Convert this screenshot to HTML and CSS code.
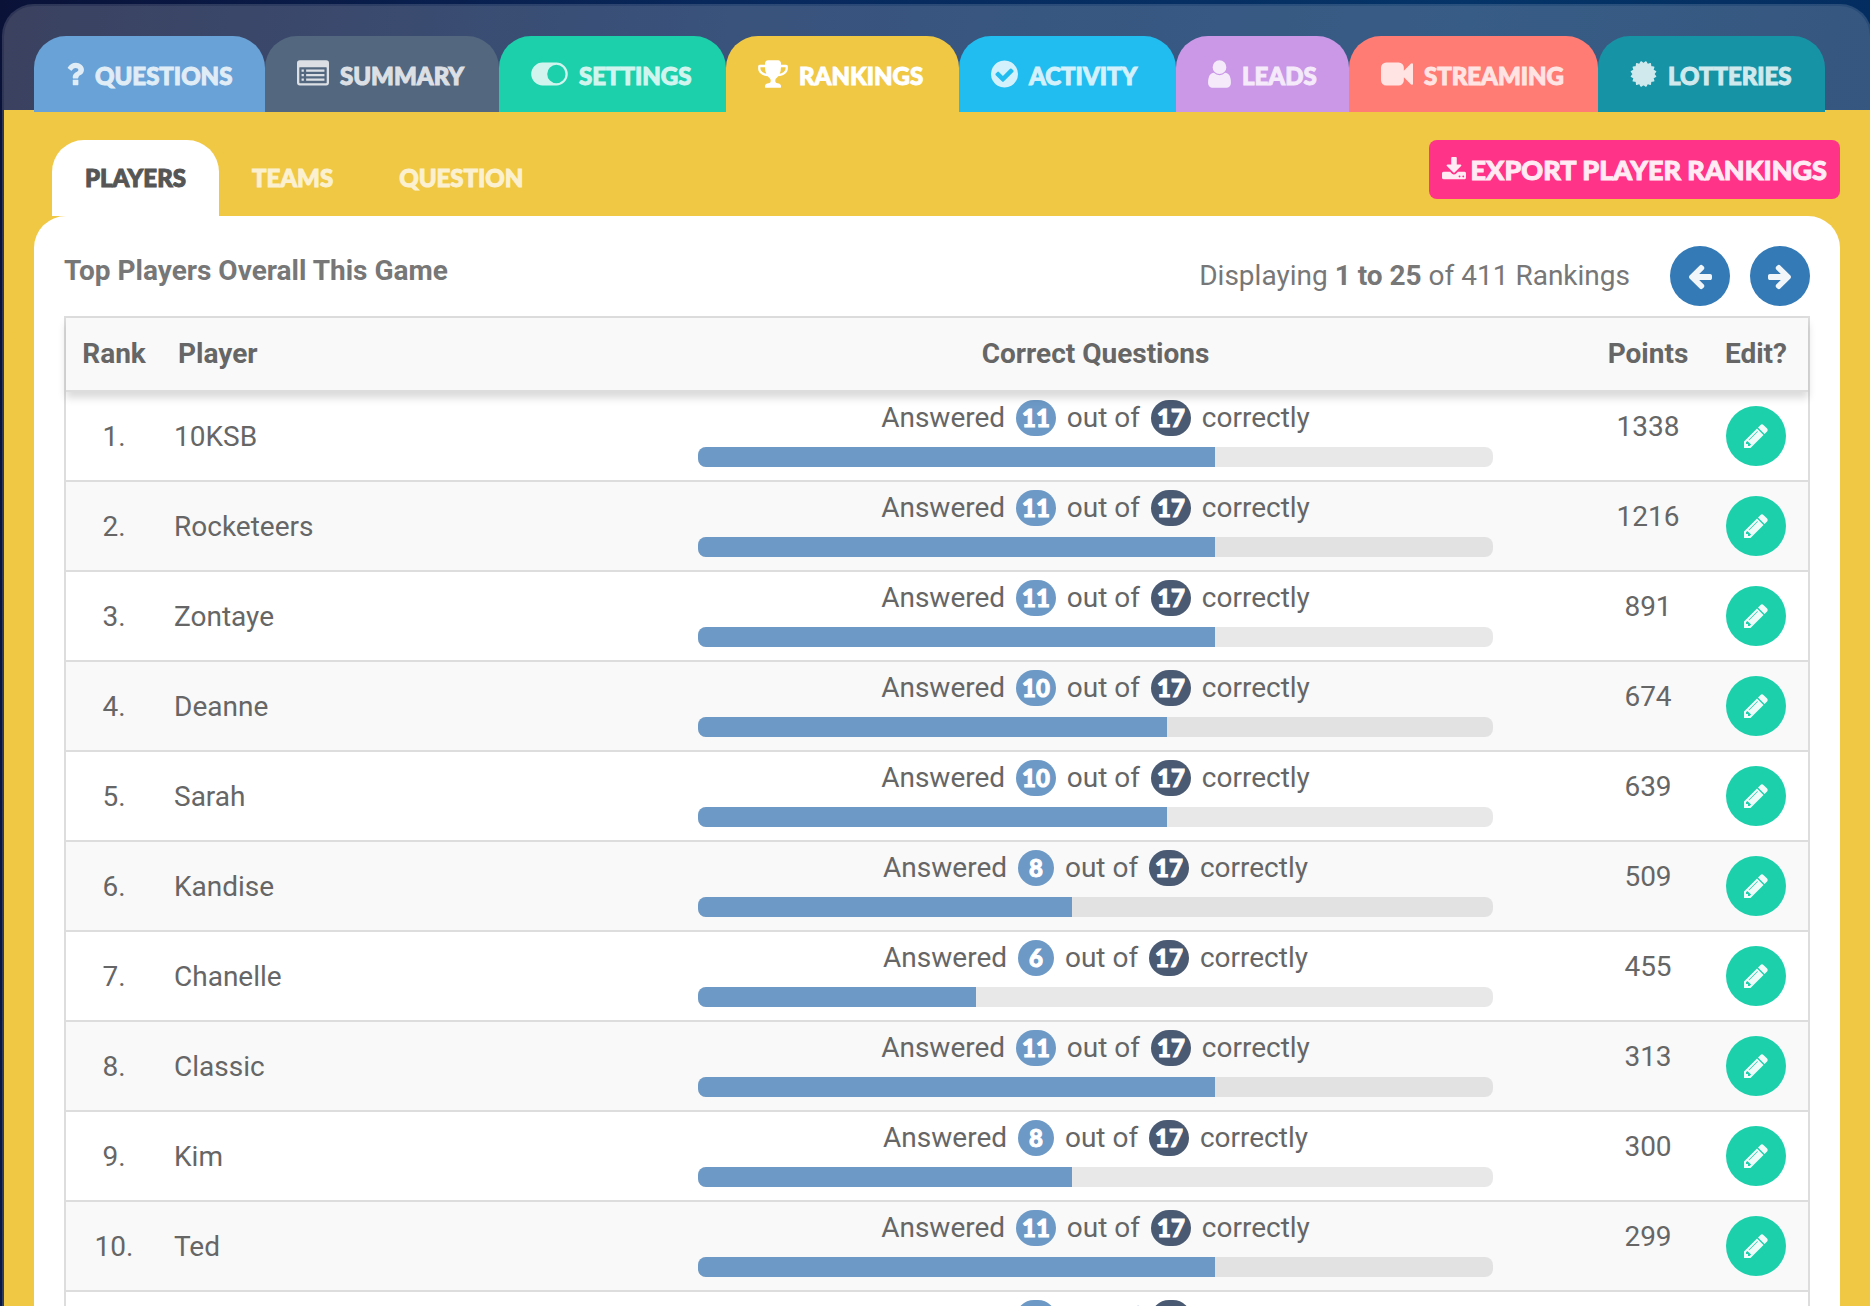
FILE: index.html
```html
<!DOCTYPE html>
<html lang="en">
<head>
<meta charset="utf-8">
<title>Player Rankings</title>
<link rel="stylesheet" href="styles.css">
</head>
<body>
<svg class="sprite" aria-hidden="true">
  <symbol id="i-question" viewBox="384 0 1024 1792"><path d="M1088 1256v240q0 16-12 28t-28 12h-240q-16 0-28-12t-12-28v-240q0-16 12-28t28-12h240q16 0 28 12t12 28zm316-600q0 54-15.500 101t-35 76.500-55 59.500-57.500 43.500-61 35.500q-41 23-68.500 65t-27.500 67q0 17-12 32.500t-28 15.500h-240q-15 0-25.500-18.500t-10.500-37.500v-45q0-83 65-156.500t143-108.500q59-27 84-56t25-76q0-42-46.500-74t-107.500-32q-65 0-108 29-35 25-107 115-13 16-31 16-12 0-25-8l-164-125q-13-10-15.500-25t5.500-28q160-266 464-266 80 0 161 31t146 83 106 127.500 41 158.500z"/></symbol>
  <symbol id="i-list" viewBox="0 0 1792 1792"><path fill-rule="evenodd" d="M160 128h1472a160 160 0 0 1 160 160v1088a160 160 0 0 1-160 160H160a160 160 0 0 1-160-160V288a160 160 0 0 1 160-160zm0 384a32 32 0 0 0-32 32v832a32 32 0 0 0 32 32h1472a32 32 0 0 0 32-32V544a32 32 0 0 0-32-32z"/><path d="M256 640h128v128H256zM256 896h128v128H256zM256 1152h128v128H256zM512 640h1024v128H512zM512 896h1024v128H512zM512 1152h1024v128H512z"/></symbol>
  <symbol id="i-toggle" viewBox="0 0 2048 1792"><path fill-rule="evenodd" d="M640 256h768a640 640 0 0 1 0 1280H640a640 640 0 0 1 0-1280zm768 128a512 512 0 1 0 0 1024 512 512 0 0 0 0-1024z"/></symbol>
  <symbol id="i-trophy" viewBox="64 0 1664 1792"><path d="M522 883q-74-162-74-371h-256v96q0 78 94.500 162t235.500 113zm1078-275v-96h-256q0 209-74 371 141-29 235.500-113t94.500-162zm128-128v128q0 71-41.500 143t-112 130-173 97.500-215.500 44.500q-42 54-95 95-38 34-52.500 72.500t-14.500 89.500q0 54 30.500 91t97.500 37q75 0 133.500 45.500t58.500 114.500v64q0 14-9 23t-23 9h-832q-14 0-23-9t-9-23v-64q0-69 58.500-114.500t133.500-45.500q67 0 97.500-37t30.500-91q0-51-14.500-89.500t-52.500-72.500q-53-41-95-95-113-5-215.500-44.500t-173-97.500-112-130-41.500-143v-128q0-40 28-68t68-28h288v-96q0-66 47-113t113-47h576q66 0 113 47t47 113v96h288q40 0 68 28t28 68z"/></symbol>
  <symbol id="i-check" viewBox="128 0 1536 1792"><path d="M1412 734q0-28-18-46l-91-90q-19-19-45-19t-45 19l-408 407-226-226q-19-19-45-19t-45 19l-91 90q-18 18-18 46 0 27 18 45l362 362q19 19 45 19 27 0 46-19l543-543q18-18 18-45zm252 162q0 209-103 385.500t-279.500 279.500-385.500 103-385.500-103-279.500-279.500-103-385.500 103-385.500 279.500-279.500 385.500-103 385.500 103 279.500 279.500 103 385.500z"/></symbol>
  <symbol id="i-user" viewBox="256 0 1280 1792"><path d="M1536 1399q0 109-62.500 187t-150.500 78h-854q-88 0-150.500-78t-62.500-187q0-85 8.500-160.500t31.500-152 58.500-131 94-89 134.500-34.500q131 128 313 128t313-128q76 0 134.500 34.500t94 89 58.500 131 31.500 152 8.500 160.500zm-256-887q0 159-112.500 271.500t-271.500 112.500-271.500-112.500-112.500-271.500 112.500-271.500 271.500-112.500 271.500 112.500 112.500 271.500z"/></symbol>
  <symbol id="i-video" viewBox="0 0 1792 1792"><path d="M1792 352v1088q0 42-39 59-13 5-25 5-27 0-45-19l-403-403v166q0 119-84.500 203.500t-203.500 84.500h-704q-119 0-203.500-84.500t-84.500-203.500v-704q0-119 84.500-203.500t203.500-84.500h704q119 0 203.500 84.500t84.500 203.500v165l403-402q18-19 45-19 12 0 25 5 39 17 39 59z"/></symbol>
  <symbol id="i-cert" viewBox="128 0 1536 1792"><path stroke="currentColor" stroke-width="80" stroke-linejoin="round" d="M896 316L1033 209L1118 360L1285 314L1306 486L1478 507L1432 674L1583 759L1476 896L1583 1033L1432 1118L1478 1285L1306 1306L1285 1478L1118 1432L1033 1583L896 1476L759 1583L674 1432L507 1478L486 1306L314 1285L360 1118L209 1033L316 896L209 759L360 674L314 507L486 486L507 314L674 360L759 209Z"/></symbol>
  <symbol id="i-download" viewBox="64 0 1664 1792"><path d="M1344 1344q0-26-19-45t-45-19-45 19-19 45 19 45 45 19 45-19 19-45zm256 0q0-26-19-45t-45-19-45 19-19 45 19 45 45 19 45-19 19-45zm128-224v320q0 40-28 68t-68 28h-1472q-40 0-68-28t-28-68v-320q0-40 28-68t68-28h465l135 136q58 56 136 56t136-56l136-136h464q40 0 68 28t28 68zm-325-569q17 41-14 70l-448 448q-18 19-45 19t-45-19l-448-448q-31-29-14-70 17-39 59-39h256v-448q0-26 19-45t45-19h256q26 0 45 19t19 45v448h256q42 0 59 39z"/></symbol>
  <symbol id="i-left" viewBox="0 0 1792 1792"><path d="M1664 896v128q0 53-32.500 90.500t-84.500 37.500h-704l293 294q38 36 38 90t-38 90l-75 76q-37 37-90 37-52 0-91-37l-651-652q-37-37-37-90 0-52 37-91l651-650q38-38 91-38 52 0 90 38l75 74q38 38 38 91t-38 91l-293 293h704q52 0 84.500 37.500t32.500 90.500z"/></symbol>
  <symbol id="i-right" viewBox="0 0 1792 1792"><path d="M1600 960q0 54-37 91l-651 651q-39 37-91 37-51 0-90-37l-75-75q-38-38-38-91t38-91l293-293h-704q-52 0-84.500-37.500t-32.500-90.500v-128q0-53 32.500-90.500t84.500-37.500h704l-293-294q-38-36-38-90t38-90l75-75q38-38 90-38 53 0 91 38l651 651q37 35 37 90z"/></symbol>
  <symbol id="i-pencil" viewBox="0 0 1792 1792"><path d="M491 1536l91-91-235-235-91 91v107h128v128h107zm523-928q0-22-22-22-10 0-17 7l-542 542q-7 7-7 17 0 22 22 22 10 0 17-7l542-542q7-7 7-17zm-54-192l416 416-832 832h-416v-416zm683 96q0 53-37 90l-166 166-416-416 166-165q36-38 90-38 53 0 91 38l235 234q37 39 37 91z"/></symbol>
</svg>

<main class="panel">
  <nav class="tabs" aria-label="Game sections">
    <a class="tab tab-questions" href="#"><svg class="icon w18"><use href="#i-question"/></svg><span>QUESTIONS</span></a>
    <a class="tab tab-summary" href="#"><svg class="icon w32"><use href="#i-list"/></svg><span>SUMMARY</span></a>
    <a class="tab tab-settings" href="#"><svg class="icon w37"><use href="#i-toggle"/></svg><span>SETTINGS</span></a>
    <a class="tab tab-rankings" href="#" aria-current="page"><svg class="icon w30"><use href="#i-trophy"/></svg><span>RANKINGS</span></a>
    <a class="tab tab-activity" href="#"><svg class="icon w27"><use href="#i-check"/></svg><span>ACTIVITY</span></a>
    <a class="tab tab-leads" href="#"><svg class="icon w23"><use href="#i-user"/></svg><span>LEADS</span></a>
    <a class="tab tab-streaming" href="#"><svg class="icon w32"><use href="#i-video"/></svg><span>STREAMING</span></a>
    <a class="tab tab-lotteries" href="#"><svg class="icon w27"><use href="#i-cert"/></svg><span>LOTTERIES</span></a>
  </nav>

  <section class="rankings">
    <div class="toolbar">
      <nav class="subtabs" aria-label="Ranking types">
        <a class="subtab" href="#" aria-current="page"><span>PLAYERS</span></a>
        <a class="subtab" href="#"><span>TEAMS</span></a>
        <a class="subtab" href="#"><span>QUESTION</span></a>
      </nav>
      <button class="export" type="button"><svg class="icon"><use href="#i-download"/></svg><span>EXPORT PLAYER RANKINGS</span></button>
    </div>

    <div class="sheet">
      <header class="sheet-head">
        <h1 class="title">Top Players Overall This Game</h1>
        <div class="pager">
          <span class="count">Displaying <b>1 to 25</b> of 411 Rankings</span>
          <button class="round page" type="button" aria-label="Previous page"><svg class="icon"><use href="#i-left"/></svg></button>
          <button class="round page" type="button" aria-label="Next page"><svg class="icon"><use href="#i-right"/></svg></button>
        </div>
      </header>
      <table class="board">
        <colgroup><col class="c-rank"><col class="c-player"><col class="c-correct"><col class="c-points"><col class="c-edit"></colgroup>
        <thead>
          <tr><th class="rank">Rank</th><th class="player">Player</th><th>Correct Questions</th><th>Points</th><th>Edit?</th></tr>
        </thead>
        <tbody id="rows"></tbody>
      </table>
    </div>
  </section>
</main>
<script src="rankings.js"></script>
</body>
</html>
```
FILE: rankings.js
```js
const TOTAL = 17;
const players = [
  ["10KSB", 11, 1338], ["Rocketeers", 11, 1216], ["Zontaye", 11, 891],
  ["Deanne", 10, 674], ["Sarah", 10, 639], ["Kandise", 8, 509],
  ["Chanelle", 6, 455], ["Classic", 11, 313], ["Kim", 8, 300],
  ["Ted", 11, 299], ["", 11, ""]
];

document.getElementById("rows").innerHTML = players.map(([name, right, points], i) => `
  <tr>
    <td class="rank">${i + 1}.</td>
    <td class="player">${name}</td>
    <td class="correct">
      <p class="answered">Answered <span class="pill">${right}</span> out of <span class="pill pill-total">${TOTAL}</span> correctly</p>
      <div class="bar"><div class="bar-fill" style="width:${Math.round(right / TOTAL * 100)}%"></div></div>
    </td>
    <td class="points">${points}</td>
    <td class="edit"><button class="round pencil" type="button" aria-label="Edit ${name}"><svg class="icon"><use href="#i-pencil"/></svg></button></td>
  </tr>`).join("");
```
FILE: styles.css
```css
* { box-sizing: border-box; }

html, body { height: 100%; }

body {
  margin: 0;
  overflow: hidden;
  background: linear-gradient(100deg, #0a1238 0%, #08285c 35%, #053468 70%, #032a5c 100%);
  color: #666;
  font: 28px/40px Roboto, "Liberation Sans", sans-serif;
}

.sprite { display: none; }
.icon { display: block; flex: none; fill: currentColor; }

.panel {
  margin: 4px -2px 0 2px;
  border: 2px solid rgba(255, 255, 255, .15);
  border-radius: 32px 32px 0 0;
  background: rgba(255, 255, 255, .2);
  background-clip: padding-box;
}

/* Section tabs */
.tabs {
  display: grid;
  grid-template-columns: 231px 234px 227px 233px 217px 173px 249px 227px;
  height: 104px;
  padding: 30px 30px 0;
}
.tab {
  display: flex;
  align-items: center;
  gap: 11px;
  height: 76px;
  padding: 4px 0 0 32px;
  border-radius: 32px 32px 0 0;
  color: #fff;
  font: 900 24px/36px Lato, sans-serif;
  text-decoration: none;
  position: relative;
}
.tab > * { opacity: .8; }
.tab[aria-current] > * { opacity: 1; }
.tab span, .subtab span, .export span { -webkit-text-stroke: 1px currentColor; }
.tab .icon { height: 32px; margin-bottom: 4px; }
.w18 { width: 18px; }
.w23 { width: 23px; }
.w27 { width: 27px; }
.w30 { width: 30px; }
.w32 { width: 32px; }
.w37 { width: 37px; }
.tab-questions { background: #68a2d6; }
.tab-summary { background: #53677f; }
.tab-settings { background: #1dd0ac; }
.tab-rankings { background: #f0c844; }
.tab-activity { background: #22bdf0; }
.tab-leads { background: #cb98e8; }
.tab-streaming { background: #ff7c75; }
.tab-lotteries { background: #1793a6; }

/* Rankings section */
.rankings {
  padding: 30px 30px 0;
  background: #f0c844;
}
.toolbar {
  display: flex;
  justify-content: space-between;
  align-items: flex-start;
}
.subtabs { display: flex; padding-left: 18px; }
.subtab {
  height: 76px;
  padding: 20px 33px;
  border-radius: 32px 32px 0 0;
  color: #fff;
  font: 900 24px/36px Lato, sans-serif;
  text-decoration: none;
}
.subtab span { opacity: .75; }
.subtab[aria-current] { background: #fff; color: #555; }
.subtab[aria-current] span { opacity: 1; }
.export {
  display: flex;
  align-items: center;
  gap: 5px;
  height: 59px;
  padding: 0 13px;
  border: 0;
  border-radius: 8px;
  background: #ff3388;
  color: #fff;
  font: 900 27px/36px Lato, sans-serif;
}
.export > * { opacity: .9; }
.export .icon { width: 24px; height: 26px; }

.sheet {
  padding: 30px 30px 0;
  border-radius: 32px 32px 0 0;
  background: #fff;
}
.sheet-head {
  display: flex;
  justify-content: space-between;
  height: 70px;
}
.title { margin: 5px 0 0; color: #777; font-size: 28px; line-height: 40px; }
.pager { display: flex; align-items: flex-start; gap: 20px; }
.count { margin-right: 20px; line-height: 60px; color: #777; }

.round {
  display: grid;
  place-items: center;
  width: 60px;
  height: 60px;
  padding: 0;
  border: 0;
  border-radius: 50%;
  color: rgba(255, 255, 255, .93);
}
.round .icon { width: 28px; height: 28px; }
.page { background: #337ab7; }
.pencil { background: #1dd0ac; }

/* Leaderboard */
.board {
  width: 100%;
  table-layout: fixed;
  border-collapse: separate;
  border-spacing: 0;
  border: 2px solid #ddd;
  border-bottom: 0;
}
.c-rank { width: 96px; }
.c-correct { width: 57%; }
.c-points { width: 112px; }
.c-edit { width: 104px; }
.board th, .board td { padding: 0; text-align: center; border-bottom: 2px solid #ddd; }
.board thead { background: #f9f9f9; box-shadow: 0 6px 8px rgba(0, 0, 0, .15); position: relative; }
.board th { height: 74px; font-weight: 700; }
.board td { height: 90px; }
.board tbody tr:nth-child(even) { background: #f9f9f9; }
.board .player { padding-left: 12px; text-align: left; }
.board th.player { padding-left: 16px; }
.board td.rank, .board td.player { padding-top: 2px; }
.board .points { padding-bottom: 18px; }
.board .edit .round { margin: 0 auto; }
.board .correct { padding-top: 8px; vertical-align: top; }

.answered { height: 36px; margin: 0 0 11px; line-height: 36px; }
.pill {
  display: inline-block;
  min-width: 36px;
  margin: 0 4px;
  padding: 0 6px;
  border-radius: 18px;
  background: #6c99c6;
  color: #fff;
  font: 900 24px/36px Lato, sans-serif;
  -webkit-text-stroke: 1px currentColor;
}
.pill-total { background: #4a5a72; }
.bar {
  width: 80%;
  height: 20px;
  margin: 0 auto;
  border-radius: 8px;
  background: rgba(0, 0, 0, .09);
  overflow: hidden;
}
.bar-fill { height: 100%; background: #6c99c6; }
```
